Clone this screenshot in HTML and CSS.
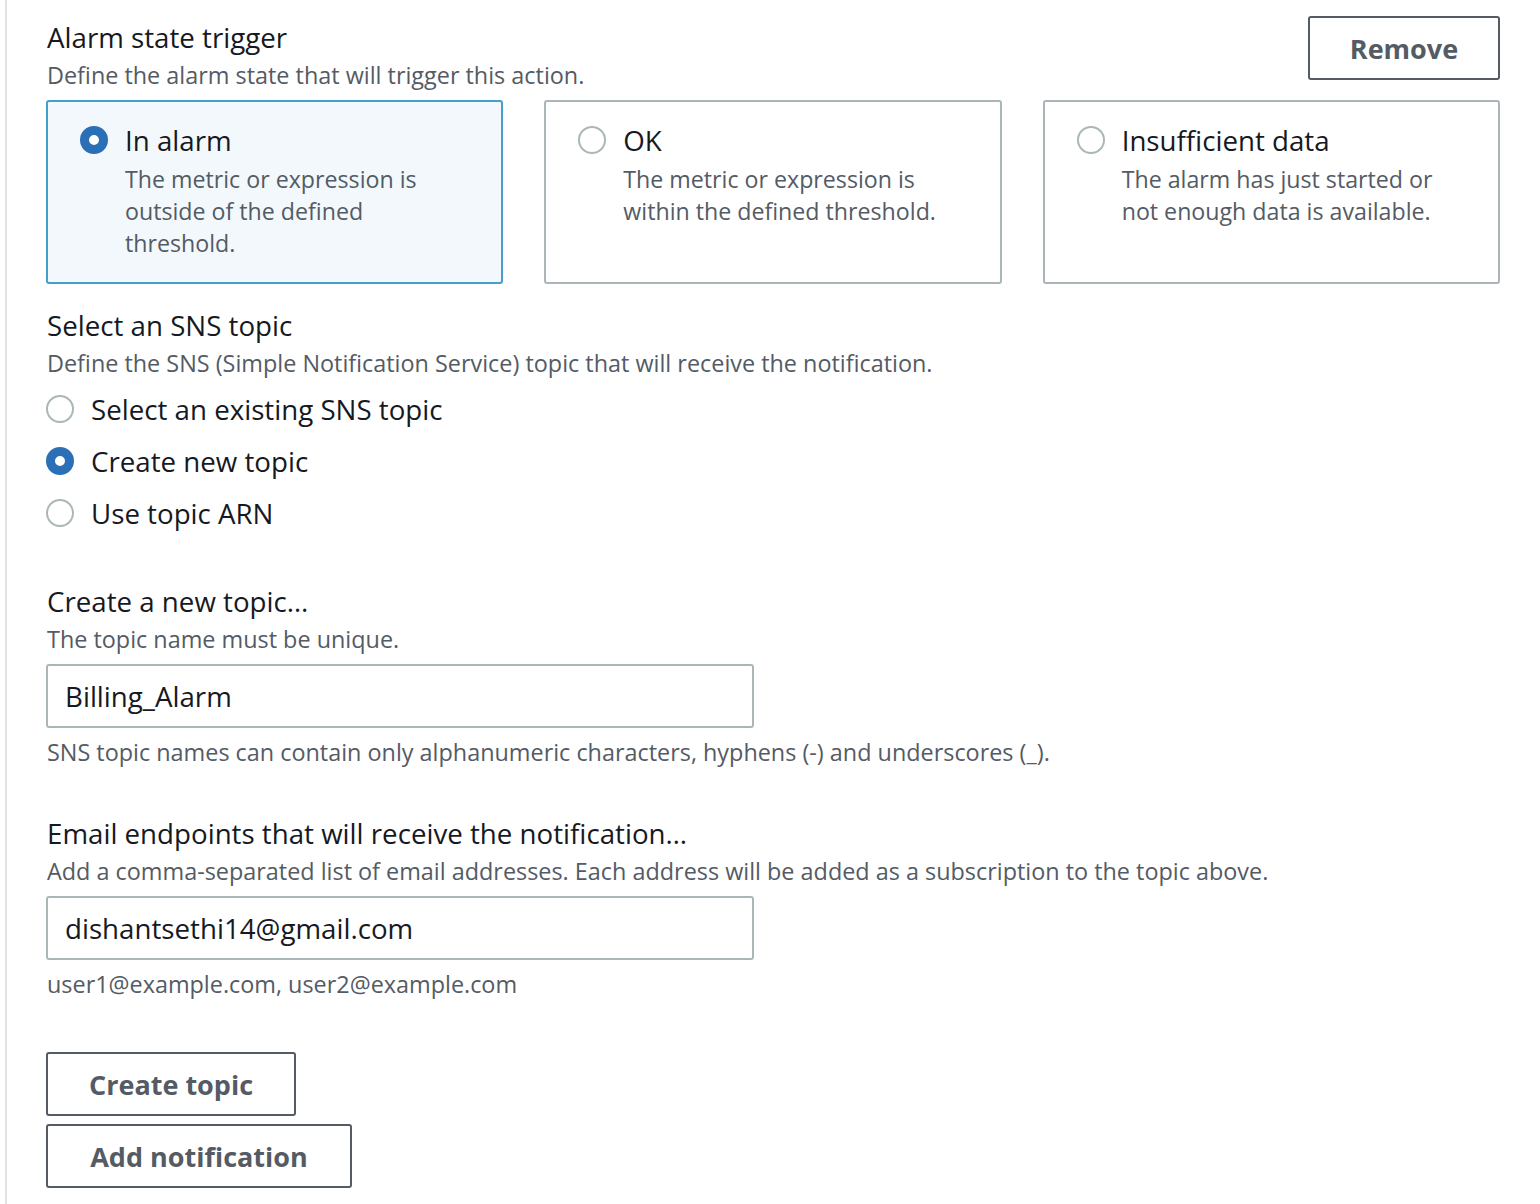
FILE: index.html
```html
<!DOCTYPE html>
<html>
<head>
<meta charset="utf-8">
<link rel="stylesheet" href="styles.css">
</head>
<body>
<div class="page">
  <div class="header">
    <div class="head-text">
      <div class="title">Alarm state trigger</div>
      <div class="desc">Define the alarm state that will trigger this action.</div>
    </div>
    <button class="btn btn-remove">Remove</button>
  </div>

  <div class="tiles">
    <div class="tile selected">
      <span class="radio checked"></span>
      <div class="tile-body">
        <div class="tile-label">In alarm</div>
        <div class="tile-desc">The metric or expression is outside of the defined threshold.</div>
      </div>
    </div>
    <div class="tile">
      <span class="radio"></span>
      <div class="tile-body">
        <div class="tile-label">OK</div>
        <div class="tile-desc">The metric or expression is within the defined threshold.</div>
      </div>
    </div>
    <div class="tile">
      <span class="radio"></span>
      <div class="tile-body">
        <div class="tile-label">Insufficient data</div>
        <div class="tile-desc">The alarm has just started or not enough data is available.</div>
      </div>
    </div>
  </div>

  <div class="section sns">
    <div class="title">Select an SNS topic</div>
    <div class="desc">Define the SNS (Simple Notification Service) topic that will receive the notification.</div>
    <div class="options">
      <div class="option"><span class="radio"></span><span class="opt-label">Select an existing SNS topic</span></div>
      <div class="option"><span class="radio checked"></span><span class="opt-label">Create new topic</span></div>
      <div class="option"><span class="radio"></span><span class="opt-label">Use topic ARN</span></div>
    </div>
  </div>

  <div class="section field">
    <div class="title">Create a new topic…</div>
    <div class="desc">The topic name must be unique.</div>
    <div class="input">Billing_Alarm</div>
    <div class="hint">SNS topic names can contain only alphanumeric characters, hyphens (-) and underscores (_).</div>
  </div>

  <div class="section field">
    <div class="title">Email endpoints that will receive the notification…</div>
    <div class="desc">Add a comma-separated list of email addresses. Each address will be added as a subscription to the topic above.</div>
    <div class="input">dishantsethi14@gmail.com</div>
    <div class="hint">user1@example.com, user2@example.com</div>
  </div>

  <div class="actions">
    <button class="btn btn-create">Create topic</button>
    <button class="btn btn-add">Add notification</button>
  </div>
</div>
</body>
</html>
```
FILE: styles.css
```css
html, body {
  margin: 0;
  padding: 0;
  background: #ffffff;
}
body {
  font-family: "Open Sans", "Noto Sans", sans-serif;
  color: #16191f;
}
.page {
  margin-left: 5px;
  border-left: 2px solid #e1e4e6;
  padding: 16px 40px 16px 40px;
  min-height: 1204px;
  box-sizing: border-box;
}
.header {
  display: flex;
  justify-content: space-between;
  align-items: flex-start;
}
.head-text {
  padding-top: 2px;
}
.title {
  font-size: 27.7px;
  line-height: 38px;
  color: #16191f;
}
.desc {
  font-size: 23.4px;
  line-height: 38px;
  color: #545b64;
}
.btn {
  font-family: inherit;
  font-weight: 700;
  font-size: 27px;
  color: #545b64;
  background: #fff;
  border: 2px solid #545b64;
  border-radius: 3px;
  height: 64px;
  box-sizing: border-box;
  padding: 0;
  cursor: pointer;
}
.btn-remove {
  width: 192px;
}
.tiles {
  display: grid;
  grid-template-columns: repeat(3, 1fr);
  column-gap: 41px;
  margin-top: 6px;
  margin-left: -1px;
}
.tile {
  display: flex;
  gap: 17px;
  height: 184px;
  box-sizing: border-box;
  border: 2px solid #aab7b8;
  border-radius: 3px;
  padding: 22px 20px 0 32px;
}
.tile.selected {
  border-color: #449fcb;
  background: #f2f8fc;
}
.radio {
  flex: none;
  width: 28px;
  height: 28px;
  box-sizing: border-box;
  border: 2px solid #aab7b8;
  border-radius: 50%;
  background: #fff;
  margin-top: 2px;
}
.radio.checked {
  border: 9px solid #2b6fb7;
  background: #fff;
}
.tile-label {
  font-size: 27.7px;
  line-height: 32px;
  color: #16191f;
}
.tile-desc {
  margin-top: 7px;
  max-width: 325px;
  font-size: 23.2px;
  line-height: 32px;
  color: #545b64;
}
.sns {
  margin-top: 22px;
}
.options {
  display: flex;
  flex-direction: column;
  gap: 14px;
  margin-top: 8px;
  margin-left: -1px;
}
.option {
  display: flex;
  align-items: center;
  gap: 17px;
  height: 38px;
}
.option .radio {
  margin-top: 0;
}
.opt-label {
  font-size: 27.7px;
  color: #16191f;
}
.field {
  margin-top: 50px;
}
.field + .field {
  margin-top: 43px;
}
.input {
  margin-top: 6px;
  margin-left: -1px;
  width: 708px;
  height: 64px;
  box-sizing: border-box;
  border: 2px solid #aab7b8;
  border-radius: 3px;
  padding: 0 17px;
  display: flex;
  align-items: center;
  font-size: 27.7px;
  color: #16191f;
}
.hint {
  margin-top: 5px;
  font-size: 23.4px;
  line-height: 38px;
  color: #545b64;
}
.actions {
  display: flex;
  flex-direction: column;
  align-items: flex-start;
  gap: 8px;
  margin-top: 49px;
  margin-left: -1px;
}
.btn-create {
  width: 250px;
}
.btn-add {
  width: 306px;
}
```
